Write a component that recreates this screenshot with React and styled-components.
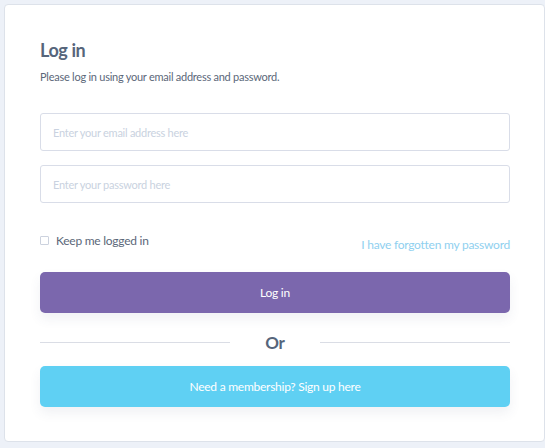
import React, { useState } from "react";
import styled, { createGlobalStyle } from "styled-components";

const Global = createGlobalStyle`
  html, body {
    margin: 0;
    background: #edf1f8;
  }
  body {
    padding: 4px;
    font-family: Lato, "Open Sans", sans-serif;
    letter-spacing: -0.25px;
  }
`;

const Card = styled.div`
  box-sizing: border-box;
  width: 541px;
  height: 438px;
  background: #ffffff;
  border: 1px solid #dde2ea;
  border-radius: 4px;
  padding: 32px 34px 0 35px;
  display: flex;
  flex-direction: column;
`;

const Title = styled.h1`
  margin: 0;
  font-size: 18px;
  font-weight: 700;
  color: #56657b;
  line-height: 26px;
  letter-spacing: -0.4px;
`;

const Subtitle = styled.p`
  margin: 7px 0 0;
  font-size: 11px;
  color: #5b6779;
  line-height: 14px;
`;

const Input = styled.input`
  box-sizing: border-box;
  width: 100%;
  height: 38px;
  border: 1px solid #d9dde8;
  border-radius: 3px;
  padding: 0 12px;
  font-family: inherit;
  font-size: 11px;
  letter-spacing: -0.25px;
  color: #56657b;
  margin-top: ${(p) => p.$top}px;
  outline: none;
  &::placeholder {
    color: #c9d2e0;
  }
`;

const OptionsRow = styled.div`
  display: flex;
  justify-content: space-between;
  align-items: flex-end;
  margin-top: 30px;
  height: 19px;
`;

const Remember = styled.label`
  display: flex;
  align-items: center;
  gap: 7px;
  font-size: 12px;
  color: #5b6779;
  align-self: flex-start;
`;

const Box = styled.span`
  width: 7px;
  height: 7px;
  border: 1px solid #ccd2de;
  border-radius: 1px;
  background: ${(p) => (p.$on ? "#7b67ad" : "#fff")};
`;

const Forgot = styled.a`
  font-size: 12px;
  color: #8fd0ef;
  text-decoration: none;
  cursor: pointer;
`;

const Button = styled.button`
  width: 100%;
  height: 41px;
  border: none;
  border-radius: 5px;
  background: ${(p) => p.$bg};
  color: #ffffff;
  font-family: inherit;
  font-size: 12px;
  letter-spacing: -0.25px;
  margin-top: ${(p) => p.$top}px;
  box-shadow: 0 6px 12px rgba(60, 80, 120, 0.08);
  cursor: pointer;
`;

const Divider = styled.div`
  display: flex;
  align-items: center;
  margin-top: 15px;
  height: 28px;
  &::before,
  &::after {
    content: "";
    flex: 1;
    height: 1px;
    background: #dadde5;
  }
`;

const Or = styled.span`
  font-size: 17px;
  font-weight: 700;
  color: #56657b;
  padding: 0 35px;
`;

export default function App() {
  const [keep, setKeep] = useState(false);
  return (
    <>
      <Global />
      <Card>
        <Title>Log in</Title>
        <Subtitle>Please log in using your email address and password.</Subtitle>
        <Input $top={29} type="email" placeholder="Enter your email address here" />
        <Input $top={14} type="password" placeholder="Enter your password here" />
        <OptionsRow>
          <Remember onClick={() => setKeep(!keep)}>
            <Box $on={keep} />
            Keep me logged in
          </Remember>
          <Forgot>I have forgotten my password</Forgot>
        </OptionsRow>
        <Button $top={20} $bg="#7b67ad">Log in</Button>
        <Divider>
          <Or>Or</Or>
        </Divider>
        <Button $top={10} $bg="#5fd0f3">Need a membership? Sign up here</Button>
      </Card>
    </>
  );
}
